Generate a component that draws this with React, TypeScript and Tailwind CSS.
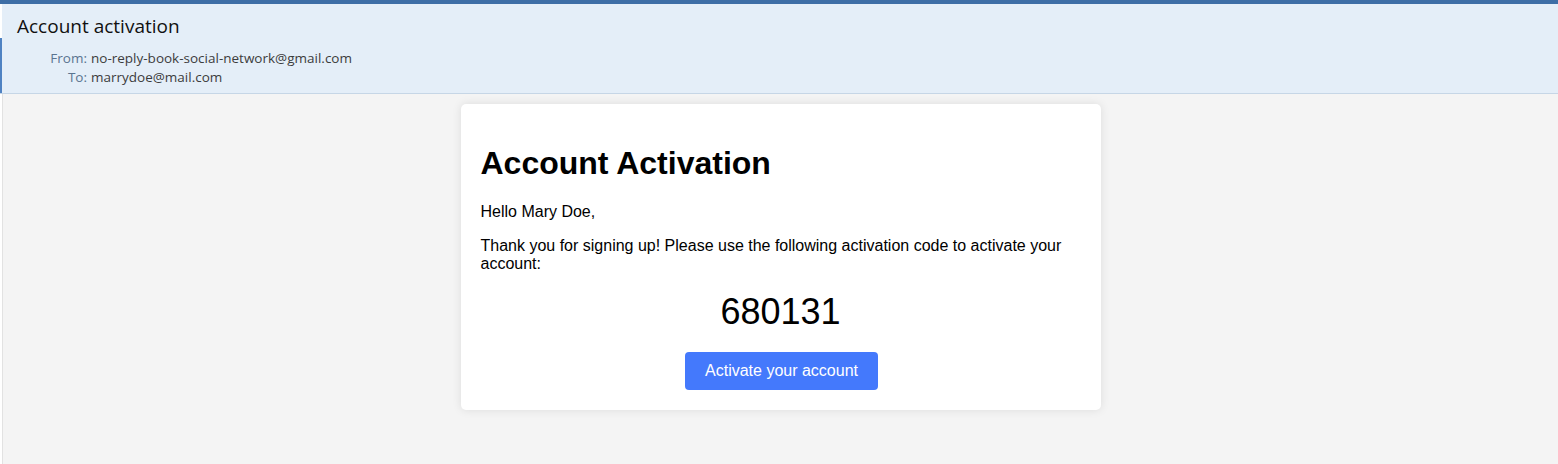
import React from 'react'

// --- Mail header row ---
const MetaRow: React.FC<{ label: string; value: string }> = ({ label, value }) => (
  <div className="flex h-[19px] items-center">
    <span className="w-[89px] pr-[4px] text-right text-[#5a7490]">{label}</span>
    <span className="text-[#3c3c3c]">{value}</span>
  </div>
)

const App: React.FC = () => {
  return (
    <div className="min-h-screen w-full bg-white">
      <div className="h-[4px] bg-[#3d6ea6]" />
      <div
        className="border-b border-[#c6d6e6] bg-[#e4eef8]"
        style={{ fontFamily: '"Open Sans", "Noto Sans", sans-serif' }}
      >
        <div className="h-[34px] border-l-2 border-white pl-[15px] pt-[10px] text-[19px] leading-[24px] text-[#111]">
          Account activation
        </div>
        <div className="border-l-2 border-[#4f82c2] pb-[6px] pt-[11px] text-[13.5px]">
          <MetaRow label="From:" value="no-reply-book-social-network@gmail.com" />
          <MetaRow label="To:" value="marrydoe@mail.com" />
        </div>
      </div>
      <div className="pl-[2px]">
        <div className="min-h-[370px] border-l border-[#e2e2e2] bg-[#f4f4f4] pt-[10px]">
          <div
            className="mx-auto w-[640px] rounded-[5px] bg-white p-[20px] text-black shadow-[0_0_10px_rgba(0,0,0,0.1)]"
            style={{ fontFamily: '"Liberation Sans", Arial, sans-serif' }}
          >
            <h1 className="my-[21px] text-[32px] font-bold leading-[37px]">Account Activation</h1>
            <p className="my-[16px] text-[16px] leading-[18px]">Hello Mary Doe,</p>
            <p className="my-[16px] text-[16px] leading-[18px]">
              Thank you for signing up! Please use the following activation code to activate your account:
            </p>
            <div className="mt-[18px] text-center text-[36px] leading-[41px]">680131</div>
            <div className="mt-[20px] text-center">
              <a className="ml-[2px] inline-block rounded-[4px] bg-[#4479fc] px-[20px] py-[10px] text-[16px] leading-[18px] text-white">
                Activate your account
              </a>
            </div>
          </div>
        </div>
      </div>
    </div>
  )
}

export default App
